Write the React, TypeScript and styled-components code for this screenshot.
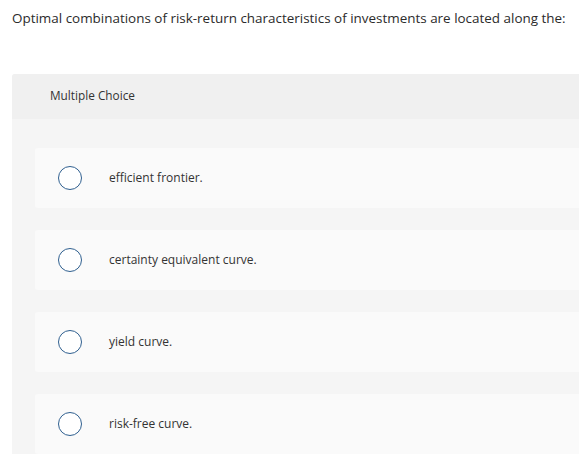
import styled, { createGlobalStyle } from "styled-components"

const GlobalStyle = createGlobalStyle`
  html, body {
    margin: 0;
    padding: 0;
    background: #ffffff;
    overflow: hidden;
  }
  body {
    font-family: "Open Sans", "Liberation Sans", sans-serif;
    color: #333333;
  }
`

const Page = styled.div`
  width: 579px;
  height: 454px;
  overflow: hidden;
`

const Question = styled.p`
  margin: 0;
  padding: 10px 0 0 12px;
  font-size: 13.45px;
  line-height: 16px;
  color: #2b2b2b;
  white-space: nowrap;
`

const Panel = styled.section`
  margin: 48px 0 0 12px;
  width: 600px;
  border-radius: 3px 0 0 0;
  background: #f5f5f5;
  padding-bottom: 20px;
`

const PanelHeader = styled.div`
  height: 45px;
  box-sizing: border-box;
  display: flex;
  align-items: center;
  padding: 0 0 3px 38px;
  background: #f0f0f0;
  border-radius: 3px 0 0 0;
  font-size: 11.8px;
  color: #333333;
`

const Options = styled.div`
  display: flex;
  flex-direction: column;
  gap: 22px;
  padding: 29px 0 0 23px;
`

const Option = styled.label`
  height: 60px;
  display: flex;
  align-items: center;
  padding-left: 23px;
  background: #fafafa;
  border-radius: 3px 0 0 3px;
  cursor: pointer;
`

const Radio = styled.span`
  width: 22px;
  height: 22px;
  border: 1.5px solid #2f5f8f;
  border-radius: 50%;
  background: #ffffff;
  flex: none;
`

const OptionText = styled.span`
  margin-left: 27px;
  margin-bottom: 1px;
  font-size: 12px;
  color: #333333;
`

const choices = [
  "efficient frontier.",
  "certainty equivalent curve.",
  "yield curve.",
  "risk-free curve.",
]

export default function App() {
  return (
    <Page>
      <GlobalStyle />
      <Question>
        Optimal combinations of risk-return characteristics of investments are located along the:
      </Question>
      <Panel>
        <PanelHeader>Multiple Choice</PanelHeader>
        <Options>
          {choices.map((c) => (
            <Option key={c}>
              <Radio />
              <OptionText>{c}</OptionText>
            </Option>
          ))}
        </Options>
      </Panel>
    </Page>
  )
}
